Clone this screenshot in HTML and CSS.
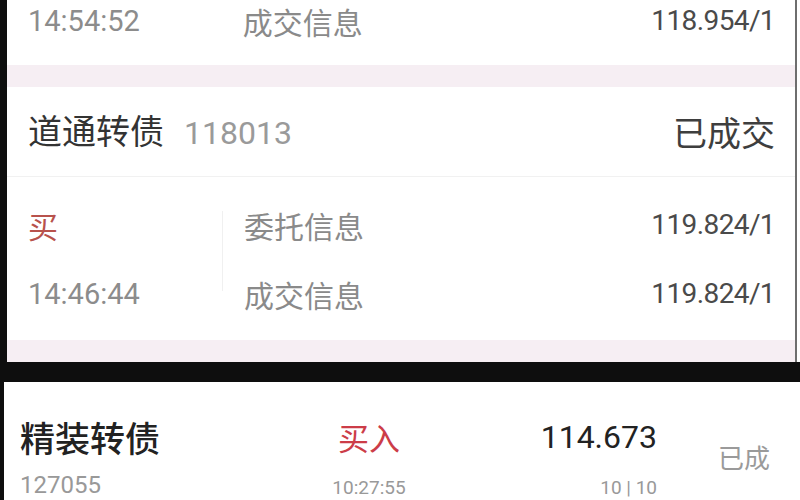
FILE: index.html
```html
<!DOCTYPE html>
<html lang="zh">
<head>
<meta charset="utf-8">
<title>成交记录</title>
<link rel="stylesheet" href="styles.css">
</head>
<body>
<div class="top">
  <div class="panel">
    <div class="row-prev">
      <span class="time">14:54:52</span>
      <span class="label">成交信息</span>
      <span class="value">118.954/1</span>
    </div>
    <div class="band"></div>
    <div class="card-head">
      <div class="name">道通转债<span class="code">118013</span></div>
      <div class="status">已成交</div>
    </div>
    <div class="card-body">
      <div class="side">
        <span class="buy">买</span>
        <span class="time">14:46:44</span>
      </div>
      <div class="info">
        <div class="info-row"><span class="label">委托信息</span><span class="value">119.824/1</span></div>
        <div class="info-row"><span class="label">成交信息</span><span class="value">119.824/1</span></div>
      </div>
    </div>
    <div class="band band-bottom"></div>
  </div>
</div>
<div class="gap"></div>
<div class="bottom">
  <div class="col col-name">
    <span class="bname">精装转债</span>
    <span class="bcode">127055</span>
  </div>
  <div class="col col-dir">
    <span class="bbuy">买入</span>
    <span class="btime">10:27:55</span>
  </div>
  <div class="col col-price">
    <span class="bprice">114.673</span>
    <span class="bqty">10 | 10</span>
  </div>
  <div class="col col-state">
    <span class="bstate">已成</span>
  </div>
</div>
</body>
</html>
```
FILE: styles.css
```css
html, body {
  margin: 0;
  padding: 0;
}
body {
  width: 800px;
  height: 500px;
  overflow: hidden;
  background: #ffffff;
  font-family: "Noto Sans CJK SC", "Noto Sans", sans-serif;
}
.top {
  border-left: 7px solid #0e0e0e;
  height: 362px;
  box-sizing: border-box;
  padding-right: 3px;
}
.panel {
  height: 362px;
  border-right: 2px solid #6e6e6e;
  background: #ffffff;
  display: flex;
  flex-direction: column;
}
.time {
  font-family: Roboto, "Noto Sans", sans-serif;
  font-size: 29px;
  color: #8c8c8c;
  line-height: 40px;
}
.label {
  font-size: 30px;
  color: #8a8a8a;
  line-height: 40px;
}
.value {
  font-family: Roboto, "Noto Sans", sans-serif;
  font-size: 28px;
  color: #4a4a4a;
  line-height: 40px;
  letter-spacing: -0.6px;
  margin-left: auto;
}
.row-prev {
  height: 65px;
  display: flex;
  align-items: flex-start;
  padding: 0 20px 0 21px;
}
.row-prev .time,
.row-prev .label,
.row-prev .value {
  line-height: 42px;
}
.row-prev .label {
  margin-left: 103px;
}
.band {
  height: 22px;
  background: #f6eef3;
}
.card-head {
  height: 90px;
  display: flex;
  align-items: center;
  justify-content: space-between;
  padding: 0 20px 0 21px;
  border-bottom: 1px solid #f1f1f1;
  box-sizing: border-box;
}
.name {
  font-size: 34px;
  color: #333333;
  line-height: 44px;
}
.code {
  font-family: Roboto, "Noto Sans", sans-serif;
  font-size: 32px;
  color: #9a9a9a;
  margin-left: 20px;
}
.status {
  font-size: 34px;
  color: #3e3e3e;
  line-height: 44px;
}
.card-body {
  flex: 1;
  display: flex;
  padding: 28px 20px 0 21px;
}
.side {
  width: 194px;
  display: flex;
  flex-direction: column;
  gap: 29px;
  border-right: 1px solid #f0f0f0;
  height: 80px;
  margin-top: 6px;
  padding-top: 0;
}
.side .buy {
  margin-top: -6px;
}
.buy {
  font-size: 30px;
  color: #b8524c;
  line-height: 40px;
  height: 40px;
}
.info {
  flex: 1;
  display: flex;
  flex-direction: column;
  gap: 29px;
  padding-left: 21px;
}
.info-row {
  display: flex;
  height: 40px;
}
.band-bottom {
  flex: none;
}
.gap {
  height: 20px;
  background: #0e0e0e;
}
.bottom {
  height: 118px;
  border-left: 4px solid #0e0e0e;
  box-sizing: border-box;
  display: grid;
  grid-template-columns: 280px 138px 219px 1fr;
  padding: 35px 0 0 16px;
  background: #ffffff;
}
.col {
  display: flex;
  flex-direction: column;
}
.bname {
  font-size: 35px;
  font-weight: 500;
  color: #222222;
  line-height: 40px;
}
.bcode {
  font-family: Roboto, "Noto Sans", sans-serif;
  font-size: 24px;
  color: #999999;
  line-height: 26px;
  margin-top: 15px;
}
.col-dir {
  align-items: center;
}
.bbuy {
  font-size: 31px;
  color: #cc3d48;
  line-height: 40px;
}
.btime {
  font-family: Roboto, "Noto Sans", sans-serif;
  font-size: 19px;
  color: #999999;
  line-height: 16px;
  margin-top: 23px;
}
.col-price {
  align-items: flex-end;
}
.bprice {
  font-family: Roboto, "Noto Sans", sans-serif;
  font-size: 32px;
  color: #222222;
  line-height: 40px;
}
.bqty {
  font-family: Roboto, "Noto Sans", sans-serif;
  font-size: 19px;
  color: #999999;
  line-height: 16px;
  margin-top: 23px;
}
.col-state {
  padding-left: 61px;
}
.bstate {
  font-size: 26px;
  color: #9a9a9a;
  line-height: 40px;
  margin-top: 20px;
}
```
